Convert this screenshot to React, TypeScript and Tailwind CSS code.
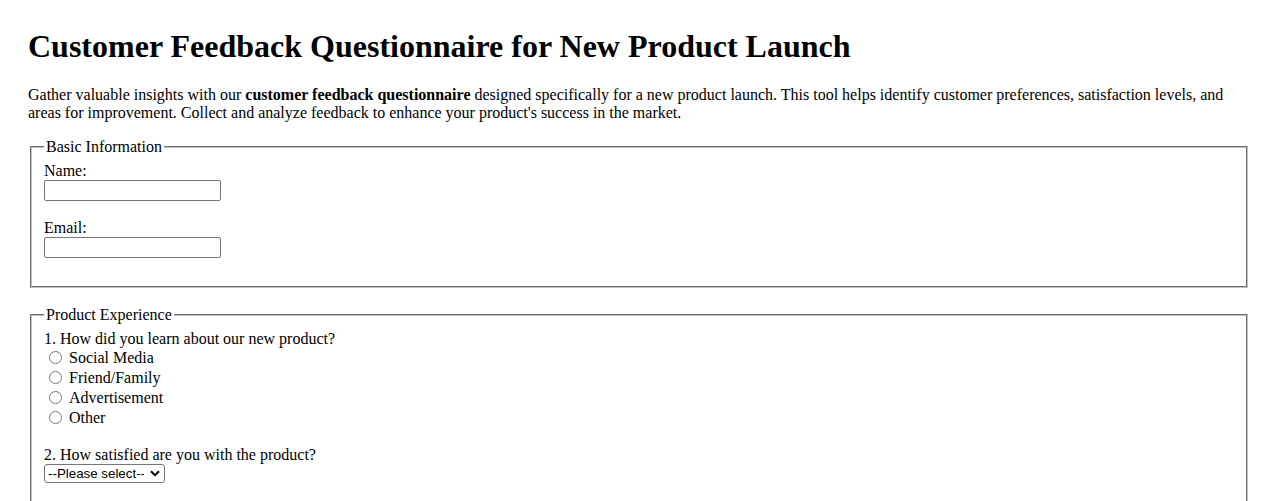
import React from 'react';

const sources = ['Social Media', 'Friend/Family', 'Advertisement', 'Other'];

export default function App() {
  return (
    <div className="min-h-screen bg-white px-[28px] pt-[28px] pb-8 font-['Liberation_Serif','Times_New_Roman',serif] text-[16px] leading-[normal] text-black">
      <h1 className="text-[32px] font-bold leading-[normal]">
        Customer Feedback Questionnaire for New Product Launch
      </h1>
      <p className="mt-[21.44px] mb-4">
        Gather valuable insights with our <strong className="font-bold">customer feedback questionnaire</strong> designed
        specifically for a new product launch. This tool helps identify customer preferences, satisfaction levels, and
        areas for improvement. Collect and analyze feedback to enhance your product's success in the market.
      </p>

      <form>
        {/* Basic info */}
        <fieldset className="mx-[2px] border-2 border-[#c0c0c0] [border-style:groove] px-3 pt-[5.6px] pb-[10px]">
          <legend className="px-[2px]">Basic Information</legend>
          <div className="mb-[18px]">
            <label htmlFor="name" className="block">Name:</label>
            <input
              id="name"
              type="text"
              className="block h-[21px] w-[177px] rounded-[2px] border border-[#767676] px-[2px] font-['Liberation_Sans',Arial,sans-serif] text-[13.33px]"
            />
          </div>
          <div className="mb-[18px]">
            <label htmlFor="email" className="block">Email:</label>
            <input
              id="email"
              type="email"
              className="block h-[21px] w-[177px] rounded-[2px] border border-[#767676] px-[2px] font-['Liberation_Sans',Arial,sans-serif] text-[13.33px]"
            />
          </div>
        </fieldset>

        {/* Product experience */}
        <fieldset className="mx-[2px] mt-[18px] border-2 border-[#c0c0c0] [border-style:groove] px-3 pt-[5.6px] pb-[40px]">
          <legend className="px-[2px]">Product Experience</legend>
          <div>
            <p>1. How did you learn about our new product?</p>
            {sources.map((s) => (
              <label key={s} className="flex h-5 items-center">
                <input type="radio" name="source" className="ml-[5px] mr-[7px] h-[13px] w-[13px]" />
                {s}
              </label>
            ))}
          </div>

          <div className="mt-[18px]">
            <p>2. How satisfied are you with the product?</p>
            <div className="relative w-[121px]">
              <select className="block h-[19px] w-[121px] appearance-none rounded-[3px] border border-[#767676] bg-white pl-[3px] pr-5 font-['Liberation_Sans',Arial,sans-serif] text-[13.33px] leading-[17px] text-black">
                <option>--Please select--</option>
                <option>Very satisfied</option>
                <option>Satisfied</option>
                <option>Neutral</option>
                <option>Dissatisfied</option>
              </select>
              <svg
                className="pointer-events-none absolute right-[5px] top-[6px] h-[7px] w-[10px]"
                viewBox="0 0 10 7"
                fill="none"
                stroke="#000"
                strokeWidth="2"
              >
                <path d="M1 1.2l4 4 4-4" />
              </svg>
            </div>
          </div>
        </fieldset>
      </form>
    </div>
  );
}
